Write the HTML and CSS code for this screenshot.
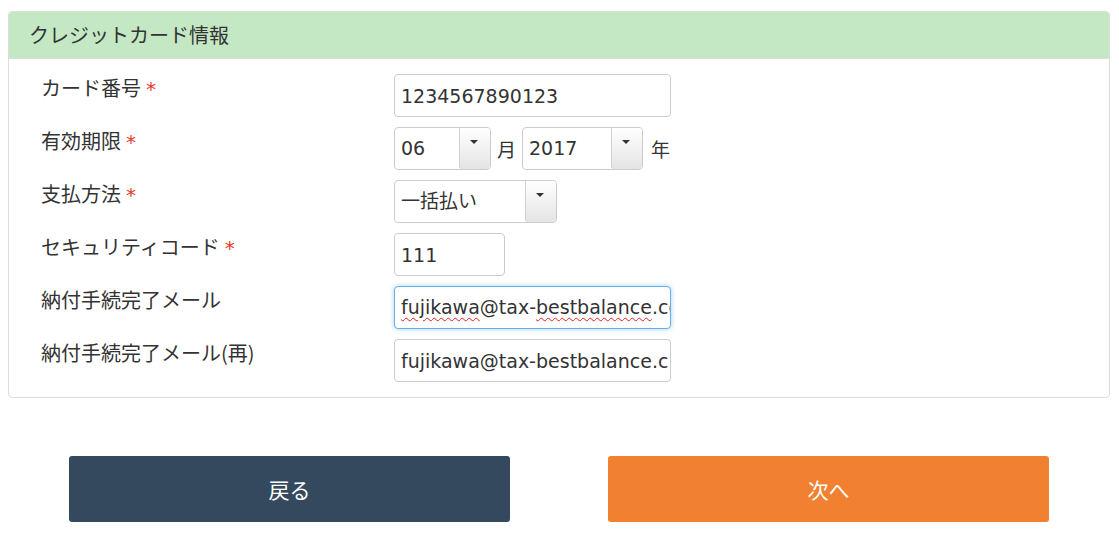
FILE: index.html
```html
<!DOCTYPE html>
<html lang="ja">
<head>
    <meta charset="UTF-8">
    <meta name="viewport" content="width=device-width, initial-scale=1.0">
    <title>クレジットカード情報</title>
    <link rel="stylesheet" href="styles.css">
</head>
<body>
    <div class="panel">
        <div class="panel-heading">クレジットカード情報</div>
        <div class="panel-body">
            <div class="form-row">
                <label class="form-label" for="cardNo">カード番号<span class="req">*</span></label>
                <input class="form-control w-card" id="cardNo" type="text" value="1234567890123">
            </div>
            <div class="form-row">
                <label class="form-label">有効期限<span class="req">*</span></label>
                <div class="inline-group">
                    <div class="select w-month">
                        <span class="select-value">06</span>
                        <span class="select-arrow"></span>
                    </div>
                    <span class="unit">月</span>
                    <div class="select w-year">
                        <span class="select-value">2017</span>
                        <span class="select-arrow"></span>
                    </div>
                    <span class="unit">年</span>
                </div>
            </div>
            <div class="form-row">
                <label class="form-label">支払方法<span class="req">*</span></label>
                <div class="select w-pay">
                    <span class="select-value">一括払い</span>
                    <span class="select-arrow"></span>
                </div>
            </div>
            <div class="form-row">
                <label class="form-label" for="secCode">セキュリティコード<span class="req">*</span></label>
                <input class="form-control w-code" id="secCode" type="text" value="111">
            </div>
            <div class="form-row">
                <label class="form-label">納付手続完了メール</label>
                <div class="form-control w-card is-focus"><span class="typo">fujikawa</span>@tax-<span class="typo">bestbalance</span>.com</div>
            </div>
            <div class="form-row">
                <label class="form-label" for="mail2">納付手続完了メール(再)</label>
                <input class="form-control w-card" id="mail2" type="text" value="fujikawa@tax-bestbalance.com">
            </div>
        </div>
    </div>

    <div class="actions">
        <button class="btn btn-back">戻る</button>
        <button class="btn btn-next">次へ</button>
    </div>
</body>
</html>
```

FILE: styles.css
```css
body {
    margin: 0;
    padding: 11px 9px 0 8px;
    background: #fff;
    color: #333;
    font-family: "DejaVu Sans", "Noto Sans CJK JP", sans-serif;
}
.panel {
    border: 1px solid #ddd;
    border-radius: 4px;
    overflow: hidden;
}
.panel-heading {
    height: 46px;
    line-height: 46px;
    padding-left: 20px;
    background: #c4e8c4;
    border-bottom: 1px solid #ddd;
    font-family: "Noto Sans CJK JP", sans-serif;
    font-size: 20px;
    color: #333;
}
.panel-body {
    display: flex;
    flex-direction: column;
    gap: 10px;
    padding: 15px 0 15px 32px;
}
.form-row {
    display: grid;
    grid-template-columns: 353px 1fr;
    align-items: start;
}
.form-label {
    font-family: "Noto Sans CJK JP", sans-serif;
    font-size: 20px;
    line-height: 27px;
    color: #333;
}
.req {
    color: #e8392b;
    margin-left: 5px;
    font-family: "DejaVu Sans", sans-serif;
    font-size: 20px;
}
.form-control {
    box-sizing: border-box;
    height: 43px;
    padding: 0 2px 0 6px;
    border: 1px solid #ccc;
    border-radius: 4px;
    font-family: "DejaVu Sans", "Noto Sans CJK JP", sans-serif;
    font-size: 19px;
    color: #333;
    background: #fff;
    outline: none;
}
div.form-control {
    line-height: 40px;
    white-space: nowrap;
    overflow: hidden;
}
.is-focus {
    border-color: #66afe9;
    box-shadow: 0 0 5px rgba(102, 175, 233, 0.6);
}
.typo {
    text-decoration: underline wavy #e0201b;
    text-decoration-thickness: 1px;
    text-underline-offset: 3px;
}
.w-card { width: 277px; }
.w-code { width: 111px; }
.w-month { width: 97px; }
.w-year { width: 121px; }
.w-pay { width: 163px; }
.inline-group {
    display: flex;
    align-items: center;
    gap: 6px;
}
.unit {
    font-family: "Noto Sans CJK JP", sans-serif;
    font-size: 19px;
    color: #333;
}
.unit:last-child {
    margin-left: 2px;
}
.select {
    box-sizing: border-box;
    height: 43px;
    display: flex;
    border: 1px solid #ccc;
    border-radius: 4px;
    overflow: hidden;
    background: #fff;
}
.select-value {
    flex: 1;
    padding-left: 6px;
    line-height: 40px;
    font-family: "DejaVu Sans", "Noto Sans CJK JP", sans-serif;
    font-size: 19px;
    color: #333;
}
.select-arrow {
    position: relative;
    width: 30px;
    border-left: 1px solid #d2d2d2;
    border-radius: 0 0 3px 3px;
    background: linear-gradient(#fff, #e4e4e4);
}
.select-arrow::after {
    content: "";
    position: absolute;
    left: 10px;
    top: 12px;
    border-left: 4px solid transparent;
    border-right: 4px solid transparent;
    border-top: 4px solid #333;
}
.actions {
    display: flex;
    justify-content: center;
    gap: 98px;
    margin-top: 58px;
}
.btn {
    width: 441px;
    height: 66px;
    border: none;
    border-radius: 3px;
    color: #fff;
    font-family: "Noto Sans CJK JP", sans-serif;
    font-size: 21px;
    cursor: pointer;
}
.btn-back {
    background-color: #34495e;
}
.btn-next {
    background-color: #f18130;
}
```
